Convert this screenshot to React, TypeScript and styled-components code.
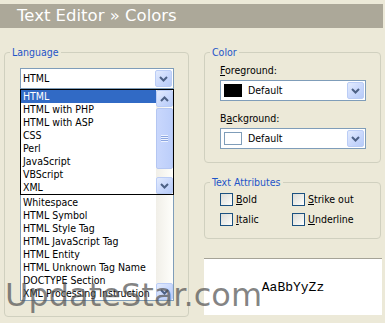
import styled, { createGlobalStyle } from 'styled-components'

const GlobalStyle = createGlobalStyle`
    html, body {
        margin: 0;
        padding: 0;
        background: #ece9d8;
    }
`

const uiFont = `"DejaVu Sans Condensed", "Liberation Sans", sans-serif`

const languages = ['HTML', 'HTML with PHP', 'HTML with ASP', 'CSS', 'Perl', 'JavaScript', 'VBScript', 'XML']

// only the rows that are not hidden by the open dropdown
const elements = [
    'Whitespace',
    'HTML Symbol',
    'HTML Style Tag',
    'HTML JavaScript Tag',
    'HTML Entity',
    'HTML Unknown Tag Name',
    'DOCTYPE Section',
    'XML Processing Instruction',
]

const Chevron = ({ up }: { up?: boolean }) => (
    <svg width="9" height="6" viewBox="0 0 9 6">
        <path
            d={up ? 'M1 5 L4.5 1.5 L8 5' : 'M1 1 L4.5 4.5 L8 1'}
            fill="none"
            stroke="#4d6185"
            strokeWidth="2"
        />
    </svg>
)

const App = () => {
    return (
        <Page>
            <GlobalStyle />
            <TitleBar>Text Editor » Colors</TitleBar>
            <Columns>
                <LeftGroup>
                    <Legend>Language</Legend>
                    <ComboWrap>
                        <Combo>
                            <ComboText>HTML</ComboText>
                            <XpButton><Chevron /></XpButton>
                        </Combo>
                        <DropList>
                            <DropItems>
                                {languages.map((lang, i) => (
                                    <Item key={lang} $selected={i === 0}>{lang}</Item>
                                ))}
                            </DropItems>
                            <ScrollBar>
                                <XpButton><Chevron up /></XpButton>
                                <Thumb $height={61}><Grip /></Thumb>
                                <Track />
                                <XpButton><Chevron /></XpButton>
                            </ScrollBar>
                        </DropList>
                    </ComboWrap>
                    <ListBox>
                        <ListItems $hiddenRows={8}>
                            {elements.map(el => (
                                <Item key={el}>{el}</Item>
                            ))}
                        </ListItems>
                        <ScrollBar>
                            <XpButton><Chevron up /></XpButton>
                            <Track />
                            <XpButton><Chevron /></XpButton>
                        </ScrollBar>
                    </ListBox>
                </LeftGroup>

                <RightColumn>
                    <ColorGroup>
                        <Legend>Color</Legend>
                        <FieldLabel><u>F</u>oreground:</FieldLabel>
                        <Combo>
                            <Swatch $color="#000000" />
                            <ComboText>Default</ComboText>
                            <XpButton><Chevron /></XpButton>
                        </Combo>
                        <FieldLabel $gap={11}>B<u>a</u>ckground:</FieldLabel>
                        <Combo>
                            <Swatch $color="#ffffff" />
                            <ComboText>Default</ComboText>
                            <XpButton><Chevron /></XpButton>
                        </Combo>
                    </ColorGroup>

                    <AttrGroup>
                        <Legend>Text Attributes</Legend>
                        <CheckGrid>
                            <Check><Box /><span><u>B</u>old</span></Check>
                            <Check><Box /><span><u>S</u>trike out</span></Check>
                            <Check><Box /><span><u>I</u>talic</span></Check>
                            <Check><Box /><span><u>U</u>nderline</span></Check>
                        </CheckGrid>
                    </AttrGroup>

                    <Preview>AaBbYyZz</Preview>
                </RightColumn>
            </Columns>
            <Watermark>UpdateStar.com</Watermark>
        </Page>
    )
}

const Page = styled.div`
    position: relative;
    width: 385px;
    height: 323px;
    overflow: hidden;
    background: #ece9d8;
    font-family: ${uiFont};
    font-size: 10.5px;
    color: #000;
`

const TitleBar = styled.div`
    margin: 4px 2px 0 0;
    height: 24px;
    background: #aca899;
    color: #fff;
    font-family: "DejaVu Sans", sans-serif;
    font-size: 16.5px;
    line-height: 24px;
    padding-left: 17px;
`

const Columns = styled.div`
    display: flex;
    gap: 15px;
    padding-left: 4px;
    margin-top: 17px;
`

const Group = styled.fieldset`
    margin: 0;
    min-width: 0;
    box-sizing: border-box;
    border: 1px solid #d0d0bf;
    border-radius: 4px;
`

/* the fieldsets have 15px left padding; pull the caption back to the border */
const Legend = styled.legend`
    padding: 0 2px;
    margin-left: -10px;
    line-height: 14px;
    font-size: 10.5px;
    color: #1f55c8;
`

const LeftGroup = styled(Group)`
    width: 185px;
    padding: 9px 14px 15px 15px;
`

const RightColumn = styled.div`
    width: 177px;
    display: flex;
    flex-direction: column;
`

const ColorGroup = styled(Group)`
    padding: 5px 14px 13px 15px;
`

const AttrGroup = styled(Group)`
    margin-top: 12px;
    padding: 4px 14px 12px 15px;
`

const FieldLabel = styled.div<{ $gap?: number }>`
    line-height: 13px;
    margin-top: ${p => p.$gap ?? 0}px;
    margin-bottom: 3px;
`

const ComboWrap = styled.div`
    position: relative;
    z-index: 2;
`

const Combo = styled.div`
    height: 21px;
    box-sizing: border-box;
    border: 1px solid #7f9db9;
    background: #fff;
    display: flex;
    align-items: center;
    padding-right: 1px;
`

const ComboText = styled.span`
    flex: 1;
    padding-left: 2px;
    line-height: 13px;
`

const XpButton = styled.div`
    width: 17px;
    height: 17px;
    box-sizing: border-box;
    display: flex;
    align-items: center;
    justify-content: center;
    border: 1px solid #bbcdf6;
    border-radius: 2px;
    background: linear-gradient(135deg, #e3ebfd 0%, #c9d8fc 55%, #b7cbf8 100%);
    flex-shrink: 0;
`

const Swatch = styled.div<{ $color: string }>`
    width: 18px;
    height: 13px;
    box-sizing: border-box;
    margin-left: 3px;
    margin-right: 4px;
    background: ${p => p.$color};
    border: 1px solid ${p => (p.$color === '#000000' ? '#000' : '#7f9db9')};
`

const DropList = styled.div`
    position: absolute;
    top: 100%;
    left: 0;
    right: 0;
    height: 106px;
    box-sizing: border-box;
    border: 1px solid #000;
    background: #fff;
    display: flex;
`

const DropItems = styled.div`
    flex: 1;
    min-width: 0;
    overflow: hidden;
`

const Item = styled.div<{ $selected?: boolean }>`
    height: 13px;
    line-height: 13px;
    padding-left: 2px;
    white-space: nowrap;
    background: ${p => (p.$selected ? '#316ac5' : 'transparent')};
    color: ${p => (p.$selected ? '#fff' : '#000')};
`

const ScrollBar = styled.div`
    flex: none;
    width: 17px;
    display: flex;
    flex-direction: column;
    background: linear-gradient(90deg, #f1efe8, #fefefb);
`

const Thumb = styled.div<{ $height: number }>`
    height: ${p => p.$height}px;
    margin-top: 1px;
    box-sizing: border-box;
    border: 1px solid #b4c6f2;
    border-radius: 2px;
    background: linear-gradient(90deg, #c9d7fc, #bccefa);
    display: flex;
    align-items: center;
    justify-content: center;
`

const Grip = styled.div`
    width: 7px;
    height: 7px;
    background: repeating-linear-gradient(180deg, #eef3fe 0 1px, #8ca6e0 1px 2px);
`

const Track = styled.div`
    flex: 1;
`

const ListBox = styled.div`
    margin-top: 2px;
    height: 210px;
    box-sizing: border-box;
    border: 1px solid #7f9db9;
    background: #fff;
    display: flex;
`

const ListItems = styled.div<{ $hiddenRows: number }>`
    flex: 1;
    min-width: 0;
    overflow: hidden;
    padding-top: ${p => p.$hiddenRows * 13}px;
`

const CheckGrid = styled.div`
    display: grid;
    grid-template-columns: 72px 1fr;
    row-gap: 7px;
`

const Check = styled.label`
    display: flex;
    align-items: center;
    gap: 3px;
    height: 13px;
    line-height: 13px;
`

const Box = styled.span`
    width: 13px;
    height: 13px;
    box-sizing: border-box;
    border: 1px solid #1c5180;
    background: linear-gradient(135deg, #dcdcd7 0%, #f4f4f0 70%, #ffffff 100%);
`

const Preview = styled.div`
    margin-top: 19px;
    width: 178px;
    height: 57px;
    box-sizing: border-box;
    background: #fff;
    border-top: 1px solid #a5a397;
    display: flex;
    align-items: center;
    justify-content: center;
    font-family: "Liberation Mono", monospace;
    font-size: 13px;
`

const Watermark = styled.div`
    position: absolute;
    left: 5px;
    top: 279px;
    font-family: "DejaVu Sans", sans-serif;
    font-size: 32px;
    line-height: 32px;
    color: rgba(85, 85, 85, 0.72);
    white-space: nowrap;
    pointer-events: none;
    z-index: 5;
`

export default App
